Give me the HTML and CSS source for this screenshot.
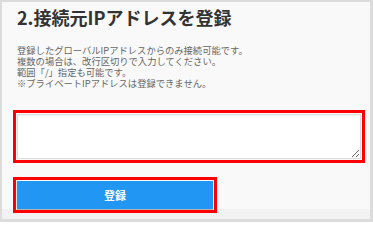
FILE: index.html
```html
<!DOCTYPE html>
<html lang="ja">
<head>
<meta charset="utf-8">
<link rel="stylesheet" href="styles.css">
</head>
<body>
<div class="panel">
  <div class="content">
    <h2 class="title">2.接続元IPアドレスを登録</h2>
    <p class="desc">登録したグローバルIPアドレスからのみ接続可能です。<br>複数の場合は、改行区切りで入力してください。<br>範囲「/」指定も可能です。<br>※プライベートIPアドレスは登録できません。</p>
    <textarea class="ip-input"></textarea>
    <button class="submit" type="button">登録</button>
  </div>
  <div class="footer"></div>
</div>
</body>
</html>
```
FILE: styles.css
```css
html, body {
  margin: 0;
  padding: 0;
  background: #ffffff;
}
.panel {
  box-sizing: border-box;
  width: 373px;
  height: 222px;
  border-style: solid;
  border-color: #dcdcdc;
  border-width: 2px 3px 3px 2px;
  background: #f9f9f9;
  overflow: hidden;
  font-family: "Noto Sans CJK JP", "Noto Sans", sans-serif;
}
.content {
  box-sizing: border-box;
  height: 207px;
  padding: 5px 0 0 15px;
  display: flex;
  flex-direction: column;
  align-items: flex-start;
}
.title {
  margin: 0;
  font-size: 18px;
  line-height: 20px;
  font-weight: bold;
  color: #333;
  flex: none;
}
.desc {
  margin: 18px 0 0;
  font-size: 9.3px;
  line-height: 11px;
  color: #666;
  flex: none;
}
.ip-input {
  box-sizing: border-box;
  flex: none;
  margin: 25px 0 0;
  width: 344px;
  height: 45px;
  border: 1px solid #ddd;
  border-radius: 0;
  background: #fff;
  box-shadow: inset 0 1px 2px rgba(0,0,0,0.06);
  outline: 3px solid #ff0000;
  outline-offset: 1px;
  padding: 2px;
}
.submit {
  flex: none;
  margin: 22px 0 0;
  width: 196px;
  height: 28px;
  border: none;
  border-radius: 0;
  background: #2196f3;
  color: #fff;
  font-family: "Noto Sans CJK JP", sans-serif;
  font-size: 11px;
  font-weight: bold;
  box-shadow: 0 1px 1px rgba(0,0,0,0.25);
  outline: 3px solid #ff0000;
  outline-offset: 1px;
  position: relative;
  z-index: 1;
}
.footer {
  height: 10px;
  background: #f2f2f2;
}
```
